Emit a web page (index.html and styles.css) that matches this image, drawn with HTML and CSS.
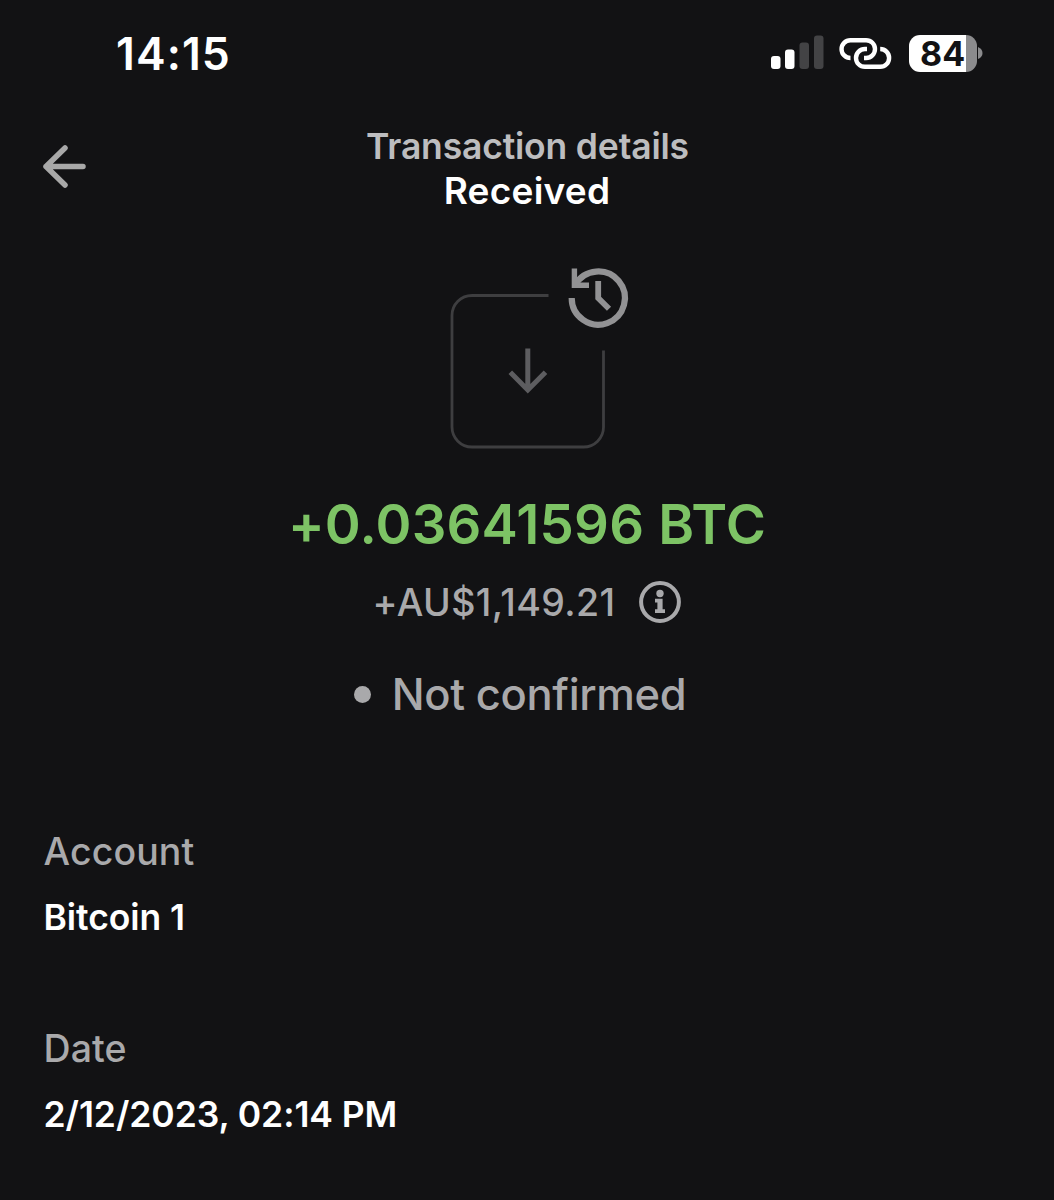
FILE: index.html
```html
<!DOCTYPE html>
<html lang="en">
<head>
<meta charset="utf-8">
<title>Transaction details</title>
<link rel="stylesheet" href="styles.css">
</head>
<body>
<div class="status-bar">
  <span class="time">14:15</span>
  <div class="indicators">
    <svg class="signal" width="54" height="36" viewBox="0 0 54 36">
      <rect x="0" y="21" width="9.5" height="13" rx="3" fill="#fff"/>
      <rect x="14" y="14.5" width="9.5" height="19.500" rx="3" fill="#fff"/>
      <rect x="28.500" y="7.500" width="9.500" height="26.500" rx="3" fill="#434345"/>
      <rect x="43" y="0.500" width="9.500" height="33.500" rx="3" fill="#434345"/>
    </svg>
    <svg class="link" width="54" height="34" viewBox="0 0 54 34" fill="none" stroke="#fff" stroke-width="4.400">
      <path d="M11.500 22A8.900 8.900 0 0 1 11.400 4.200H27.100A8.900 8.900 0 0 1 27.100 22H25"/>
      <path d="M41.200 13A8.900 8.900 0 0 1 41.200 30.800H25.900A8.900 8.900 0 0 1 25.900 13H28"/>
    </svg>
    <div class="battery"><span class="level">84</span></div>
    <svg class="battery-cap" width="5" height="12" viewBox="0 0 5 12"><path d="M0 0Q4.500 2 4.500 6T0 12Z" fill="#8b8b8d"/></svg>
  </div>
</div>
<header class="header">
  <svg class="back" width="46" height="46" viewBox="0 0 46 46" fill="none" stroke="#a8a8a8" stroke-width="5.500" stroke-linecap="round" stroke-linejoin="round"><path d="M42 23.500H5M24 5L5 23.500L24 42"/></svg>
  <div class="titles">
    <div class="title">Transaction details</div>
    <h1 class="subtitle">Received</h1>
  </div>
</header>
<main>
  <section class="summary">
    <svg class="hero" width="210" height="200" viewBox="430 260 210 200" fill="none">
      <path d="M548.500 295.500H472A20 20 0 0 0 452 315.500V427A20 20 0 0 0 472 447H583.500A20 20 0 0 0 603.500 427V350.500" stroke="#3e3e40" stroke-width="2.800"/>
      <path d="M527.800 348.500V390M510.300 372.300L527.800 390L545.500 372.300" stroke="#5d5d60" stroke-width="5"/>
      <path d="M571.700 298A26.600 26.600 0 1 0 575.300 284.700" stroke="#929294" stroke-width="6.200"/>
      <path d="M574.400 268.500V285.300H589" stroke="#929294" stroke-width="5.400"/>
      <path d="M598.200 281V298L609 308.800" stroke="#929294" stroke-width="5.800"/>
    </svg>
    <div class="amount">+0.03641596 BTC</div>
    <div class="fiat"><span class="fiat-value">+AU$1,149.21</span>
      <svg class="info" width="42" height="42" viewBox="0 0 42 42"><circle cx="21" cy="21" r="18.900" fill="none" stroke="#a9a9ab" stroke-width="4"/><circle cx="21" cy="12.500" r="3.700" fill="#a9a9ab"/><path d="M16 17.700H23.600V28.300H26V32H16V28.300H18.400V21.400H16Z" fill="#a9a9ab"/></svg>
    </div>
    <div class="confirmation"><span class="dot"></span><span class="state">Not confirmed</span></div>
  </section>
  <dl class="details">
    <div class="row"><dt>Account</dt><dd class="account">Bitcoin 1</dd></div>
    <div class="row"><dt class="date-label">Date</dt><dd class="date">2/12/2023, 02:14 PM</dd></div>
  </dl>
</main>
</body>
</html>
```
FILE: styles.css
```css
* { box-sizing: border-box; margin: 0; padding: 0; }
body {
  height: 1200px;
  overflow: hidden;
  background: #121214;
  color: #fff;
  font-family: Inter, "Liberation Sans", sans-serif;
  white-space: nowrap;
}
svg { display: block; flex: none; }
.status-bar {
  display: flex;
  justify-content: space-between;
  align-items: center;
  height: 106px;
  padding: 0 71px 0 116px;
}
.time { padding-top: 1px; font-size: 44.5px; font-weight: 600; line-height: 54px; letter-spacing: 1.1px; }
.indicators { display: flex; align-items: center; }
.link { margin-left: 14px; }
.battery {
  width: 68px;
  height: 37px;
  margin-left: 16px;
  border-radius: 11px;
  background: linear-gradient(90deg, #fff 57px, #8b8b8d 57px);
}
.level {
  display: block;
  padding-left: 11px;
  color: #121214;
  font-size: 34px;
  font-weight: 700;
  line-height: 37px;
}
.battery-cap { margin-left: 1px; }
.header {
  display: grid;
  grid-template-columns: 46px 1fr 46px;
  height: 154px;
  padding: 19px 41px 0;
}
.back { margin-top: 18px; }
.titles { text-align: center; }
.title { padding-left: 1px; color: #bdbdbf; font-size: 35.5px; font-weight: 600; line-height: 44px; letter-spacing: -0.18px; }
.subtitle { font-size: 37px; font-weight: 600; line-height: 44px; letter-spacing: 0.25px; }
.summary { display: flex; flex-direction: column; align-items: center; }
.hero { margin-left: 16px; }
.amount { margin-top: 34px; color: #7dc365; font-size: 54.5px; font-weight: 600; line-height: 60px; letter-spacing: 0.2px; }
.fiat { display: flex; align-items: center; gap: 24px; margin-top: 20px; height: 56px; }
.fiat-value { padding-top: 1px; color: #a9a9ab; font-size: 37.5px; font-weight: 450; line-height: 56px; letter-spacing: 0.4px; }
.confirmation { display: flex; align-items: center; gap: 21px; margin: 34px 14px 0 0; height: 60px; }
.dot { width: 17px; height: 17px; border-radius: 50%; background: #a9a9ab; }
.state { color: #a9a9ab; font-size: 43.5px; font-weight: 450; line-height: 60px; letter-spacing: -0.35px; }
.details { display: flex; flex-direction: column; gap: 71px; padding: 98px 43.5px 0; }
dt { color: #a9a9ab; font-size: 37.5px; font-weight: 450; line-height: 60px; letter-spacing: 0.1px; }
dd { margin-top: 6px; font-size: 35.5px; font-weight: 600; line-height: 60px; letter-spacing: -0.08px; }
```
